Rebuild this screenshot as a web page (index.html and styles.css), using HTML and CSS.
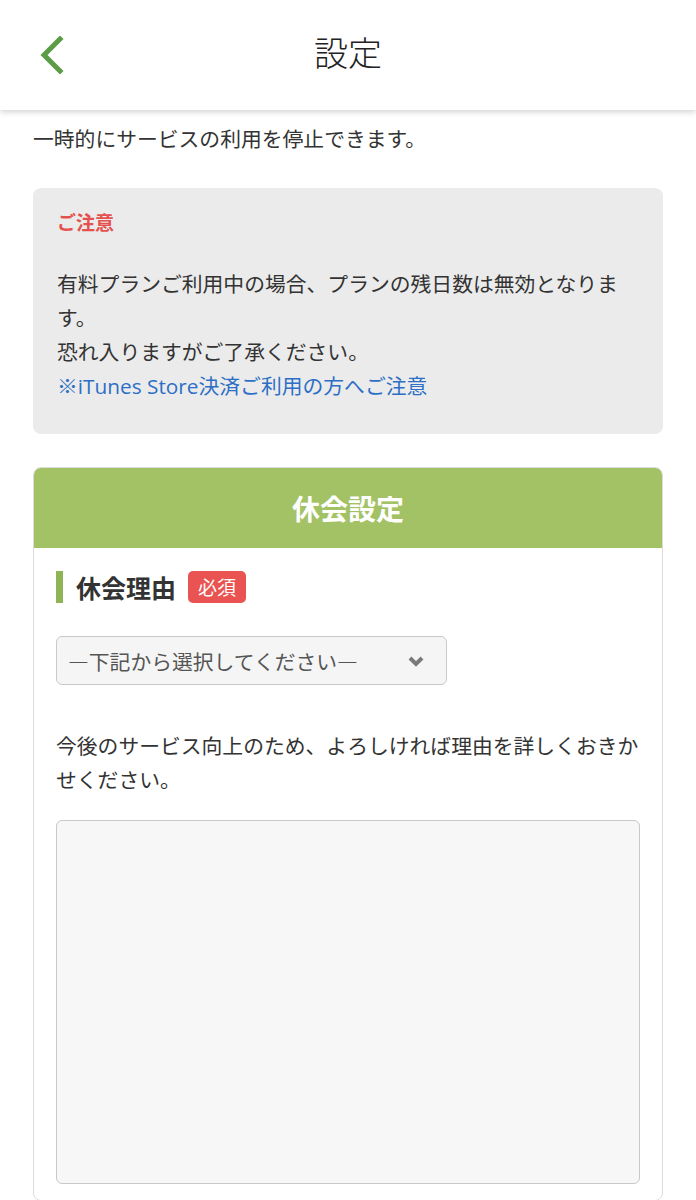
FILE: index.html
```html
<!DOCTYPE html>
<html lang="ja">
<head>
    <meta charset="UTF-8">
    <meta name="viewport" content="width=device-width, initial-scale=1.0">
    <title>設定</title>
    <link rel="stylesheet" href="styles.css">
</head>
<body>
    <header class="topbar">
        <a class="back" href="#" aria-label="戻る">
            <svg width="26" height="38" viewBox="0 0 26 38">
                <polyline points="22,3 6,19 22,35" fill="none" stroke="#5c9c47" stroke-width="5" stroke-linecap="square"/>
            </svg>
        </a>
        <h1>設定</h1>
        <span></span>
    </header>

    <main class="content">
        <p class="lead">一時的にサービスの利用を停止できます。</p>

        <div class="notice">
            <p class="notice-title">ご注意</p>
            <p class="notice-body">有料プランご利用中の場合、プランの残日数は無効となります。<br>恐れ入りますがご了承ください。<br><a href="#">※iTunes Store決済ご利用の方へご注意</a></p>
        </div>

        <section class="card">
            <h2 class="card-head">休会設定</h2>
            <div class="card-body">
                <div class="field-label">
                    <span class="label-text">休会理由</span>
                    <span class="badge">必須</span>
                </div>

                <div class="select">
                    <span>―下記から選択してください―</span>
                    <svg width="16" height="12" viewBox="0 0 16 12">
                        <polyline points="2,3 8,9 14,3" fill="none" stroke="#7a7a7a" stroke-width="4"/>
                    </svg>
                </div>

                <p class="hint">今後のサービス向上のため、よろしければ理由を詳しくおきかせください。</p>

                <textarea class="reason"></textarea>
            </div>
        </section>
    </main>
</body>
</html>
```

FILE: styles.css
```css
body {
    margin: 0;
    font-family: "Noto Sans CJK JP", sans-serif;
    color: #333;
    background: #fff;
}

p {
    margin: 0;
}

.topbar {
    display: grid;
    grid-template-columns: 1fr auto 1fr;
    align-items: center;
    height: 110px;
    padding: 0 0 0 38px;
    background: #fff;
    box-shadow: 0 2px 6px rgba(0, 0, 0, 0.18);
    position: relative;
}

.back {
    display: flex;
}

.topbar h1 {
    margin: 0 0 8px;
    font-size: 34px;
    font-weight: 300;
    color: #222;
    padding-right: 38px;
}

.content {
    padding: 0 33px;
}

.lead {
    padding-top: 11px;
    font-size: 20.8px;
    line-height: 34px;
}

.notice {
    margin-top: 33px;
    padding: 17px 24px 31px;
    background: #ebebeb;
    border-radius: 8px;
}

.notice-title {
    color: #e5514f;
    font-size: 19px;
    font-weight: bold;
    line-height: 34px;
}

.notice-body {
    margin-top: 27px;
    font-size: 20.8px;
    line-height: 34px;
}

.notice-body a {
    font-family: "Open Sans", "Noto Sans CJK JP", sans-serif;
    color: #2d6fc6;
    text-decoration: none;
}

.card {
    margin-top: 33px;
    border: 1px solid #dcdcdc;
    border-radius: 8px;
    overflow: hidden;
}

.card-head {
    margin: 0;
    height: 80px;
    display: flex;
    align-items: center;
    justify-content: center;
    background: #a3c266;
    color: #fff;
    font-size: 28px;
}

.card-body {
    padding: 23px 22px 16px;
}

.field-label {
    display: flex;
    align-items: center;
    gap: 12px;
    height: 32px;
    border-left: 7px solid #8fb455;
    padding-left: 13px;
}

.label-text {
    font-size: 25px;
    font-weight: bold;
}

.badge {
    background: #e95452;
    color: #fff;
    font-size: 19px;
    line-height: 32px;
    padding: 0 10px;
    border-radius: 5px;
}

.select {
    margin-top: 33px;
    width: 391px;
    height: 49px;
    box-sizing: border-box;
    display: flex;
    align-items: center;
    justify-content: space-between;
    padding: 0 22px 0 11px;
    background: #f5f5f5;
    border: 1px solid #c9c9c9;
    border-radius: 6px;
    font-size: 20.8px;
    color: #555;
}

.hint {
    margin-top: 43px;
    font-size: 20.8px;
    line-height: 34px;
}

.reason {
    display: block;
    margin-top: 24px;
    width: 100%;
    height: 364px;
    box-sizing: border-box;
    background: #f7f7f7;
    border: 1px solid #c8c8c8;
    border-radius: 6px;
    resize: none;
}
```
